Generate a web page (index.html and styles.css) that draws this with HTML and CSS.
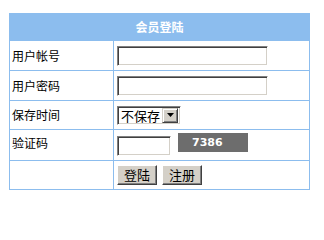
FILE: index.html
```html
<!DOCTYPE html>
<html lang="zh-CN">
<head>
<meta charset="utf-8">
<title>会员登陆</title>
<link rel="stylesheet" href="styles.css">
</head>
<body>
<form class="login">
<table class="login-table">
  <colgroup><col class="col-label"><col class="col-field"></colgroup>
  <tr class="row-head"><th colspan="2">会员登陆</th></tr>
  <tr class="row-user">
    <td class="label">用户帐号</td>
    <td class="field"><input class="text-input" type="text"></td>
  </tr>
  <tr class="row-pass">
    <td class="label">用户密码</td>
    <td class="field"><input class="text-input" type="password"></td>
  </tr>
  <tr class="row-keep">
    <td class="label">保存时间</td>
    <td class="field">
      <span class="select"><span class="select-text">不保存</span><span class="select-btn"><svg width="7" height="4" viewBox="0 0 7 4"><path d="M0 0h7L3.5 4z" fill="#000"/></svg></span></span>
    </td>
  </tr>
  <tr class="row-code">
    <td class="label label-top">验证码</td>
    <td class="field">
      <div class="code-line">
        <input class="code-input" type="text">
        <span class="code-img">7386</span>
      </div>
    </td>
  </tr>
  <tr class="row-btns">
    <td class="label"></td>
    <td class="field">
      <div class="btn-line">
        <button type="button" class="btn">登陆</button>
        <button type="button" class="btn">注册</button>
      </div>
    </td>
  </tr>
</table>
</form>
</body>
</html>
```

FILE: styles.css
```css
html, body {
  margin: 0;
  padding: 0;
  background: #fff;
}
body {
  font-family: "Noto Sans CJK SC", "Liberation Sans", sans-serif;
  font-size: 12px;
  line-height: 14px;
  color: #000;
}
.login {
  margin: 13px 0 0 9px;
}
.login-table {
  border-collapse: collapse;
  width: 300px;
  table-layout: fixed;
}
.col-label { width: 104px; }
.col-field { width: 196px; }
.login-table th,
.login-table td {
  border: 1px solid #8cbdee;
  padding: 0;
  line-height: 14px;
}
.row-head { height: 27px; }
.row-user, .row-pass { height: 30px; }
.row-keep { height: 29px; }
.row-code { height: 31px; }
.row-btns { height: 29px; }
.row-head th {
  background: #8cbdee;
  color: #fff;
  font-weight: bold;
  font-size: 12px;
  text-align: center;
}
.label {
  padding-left: 2px !important;
  vertical-align: middle;
}
.label-top {
  vertical-align: top;
  padding-top: 6px !important;
}
.field {
  padding-left: 3px !important;
  vertical-align: middle;
}

.text-input, .code-input {
  display: block;
  box-sizing: border-box;
  height: 20px;
  margin: 0;
  padding: 0 2px;
  border-style: solid;
  border-width: 1px;
  border-color: #808080 #ffffff #ffffff #808080;
  box-shadow: inset 1px 1px 0 #404040, inset -1px -1px 0 #d4d0c8;
  background: #fff;
  font: 12px "Liberation Sans", sans-serif;
  outline: none;
}
.text-input { width: 151px; }
.code-input { width: 54px; margin-top: 3px; }

.select {
  display: flex;
  align-items: center;
  box-sizing: border-box;
  width: 64px;
  height: 19px;
  border-style: solid;
  border-width: 1px;
  border-color: #808080 #ffffff #ffffff #808080;
  box-shadow: inset 1px 1px 0 #404040, inset -1px -1px 0 #d4d0c8;
  padding: 2px 2px 2px 3px;
  background: #fff;
}
.select-text {
  flex: 1;
  font-size: 13px;
  line-height: 15px;
}
.select-btn {
  box-sizing: border-box;
  width: 16px;
  height: 15px;
  background: #d4d0c8;
  border-style: solid;
  border-width: 1px;
  border-color: #d4d0c8 #404040 #404040 #d4d0c8;
  box-shadow: inset 1px 1px 0 #fff, inset -1px -1px 0 #808080;
  display: flex;
  align-items: center;
  justify-content: center;
}
.select-btn svg { display: block; }

.code-line {
  display: flex;
  align-items: flex-start;
  gap: 7px;
  margin-top: -1px;
}
.code-img {
  display: block;
  width: 70px;
  height: 19px;
  background: #6d6d6d;
  color: #fff;
  font: bold 11px "DejaVu Sans", sans-serif;
  line-height: 19px;
  padding-left: 14px;
  box-sizing: border-box;
}

.btn-line {
  display: flex;
  gap: 5px;
}
.btn {
  box-sizing: border-box;
  height: 20px;
  width: 40px;
  margin: 0;
  padding: 0;
  background: #d4d0c8;
  border-style: solid;
  border-width: 1px;
  border-color: #ffffff #404040 #404040 #ffffff;
  box-shadow: inset -1px -1px 0 #808080;
  font-family: "Noto Sans CJK SC", sans-serif;
  font-size: 13px;
  line-height: 16px;
  color: #000;
}
```
